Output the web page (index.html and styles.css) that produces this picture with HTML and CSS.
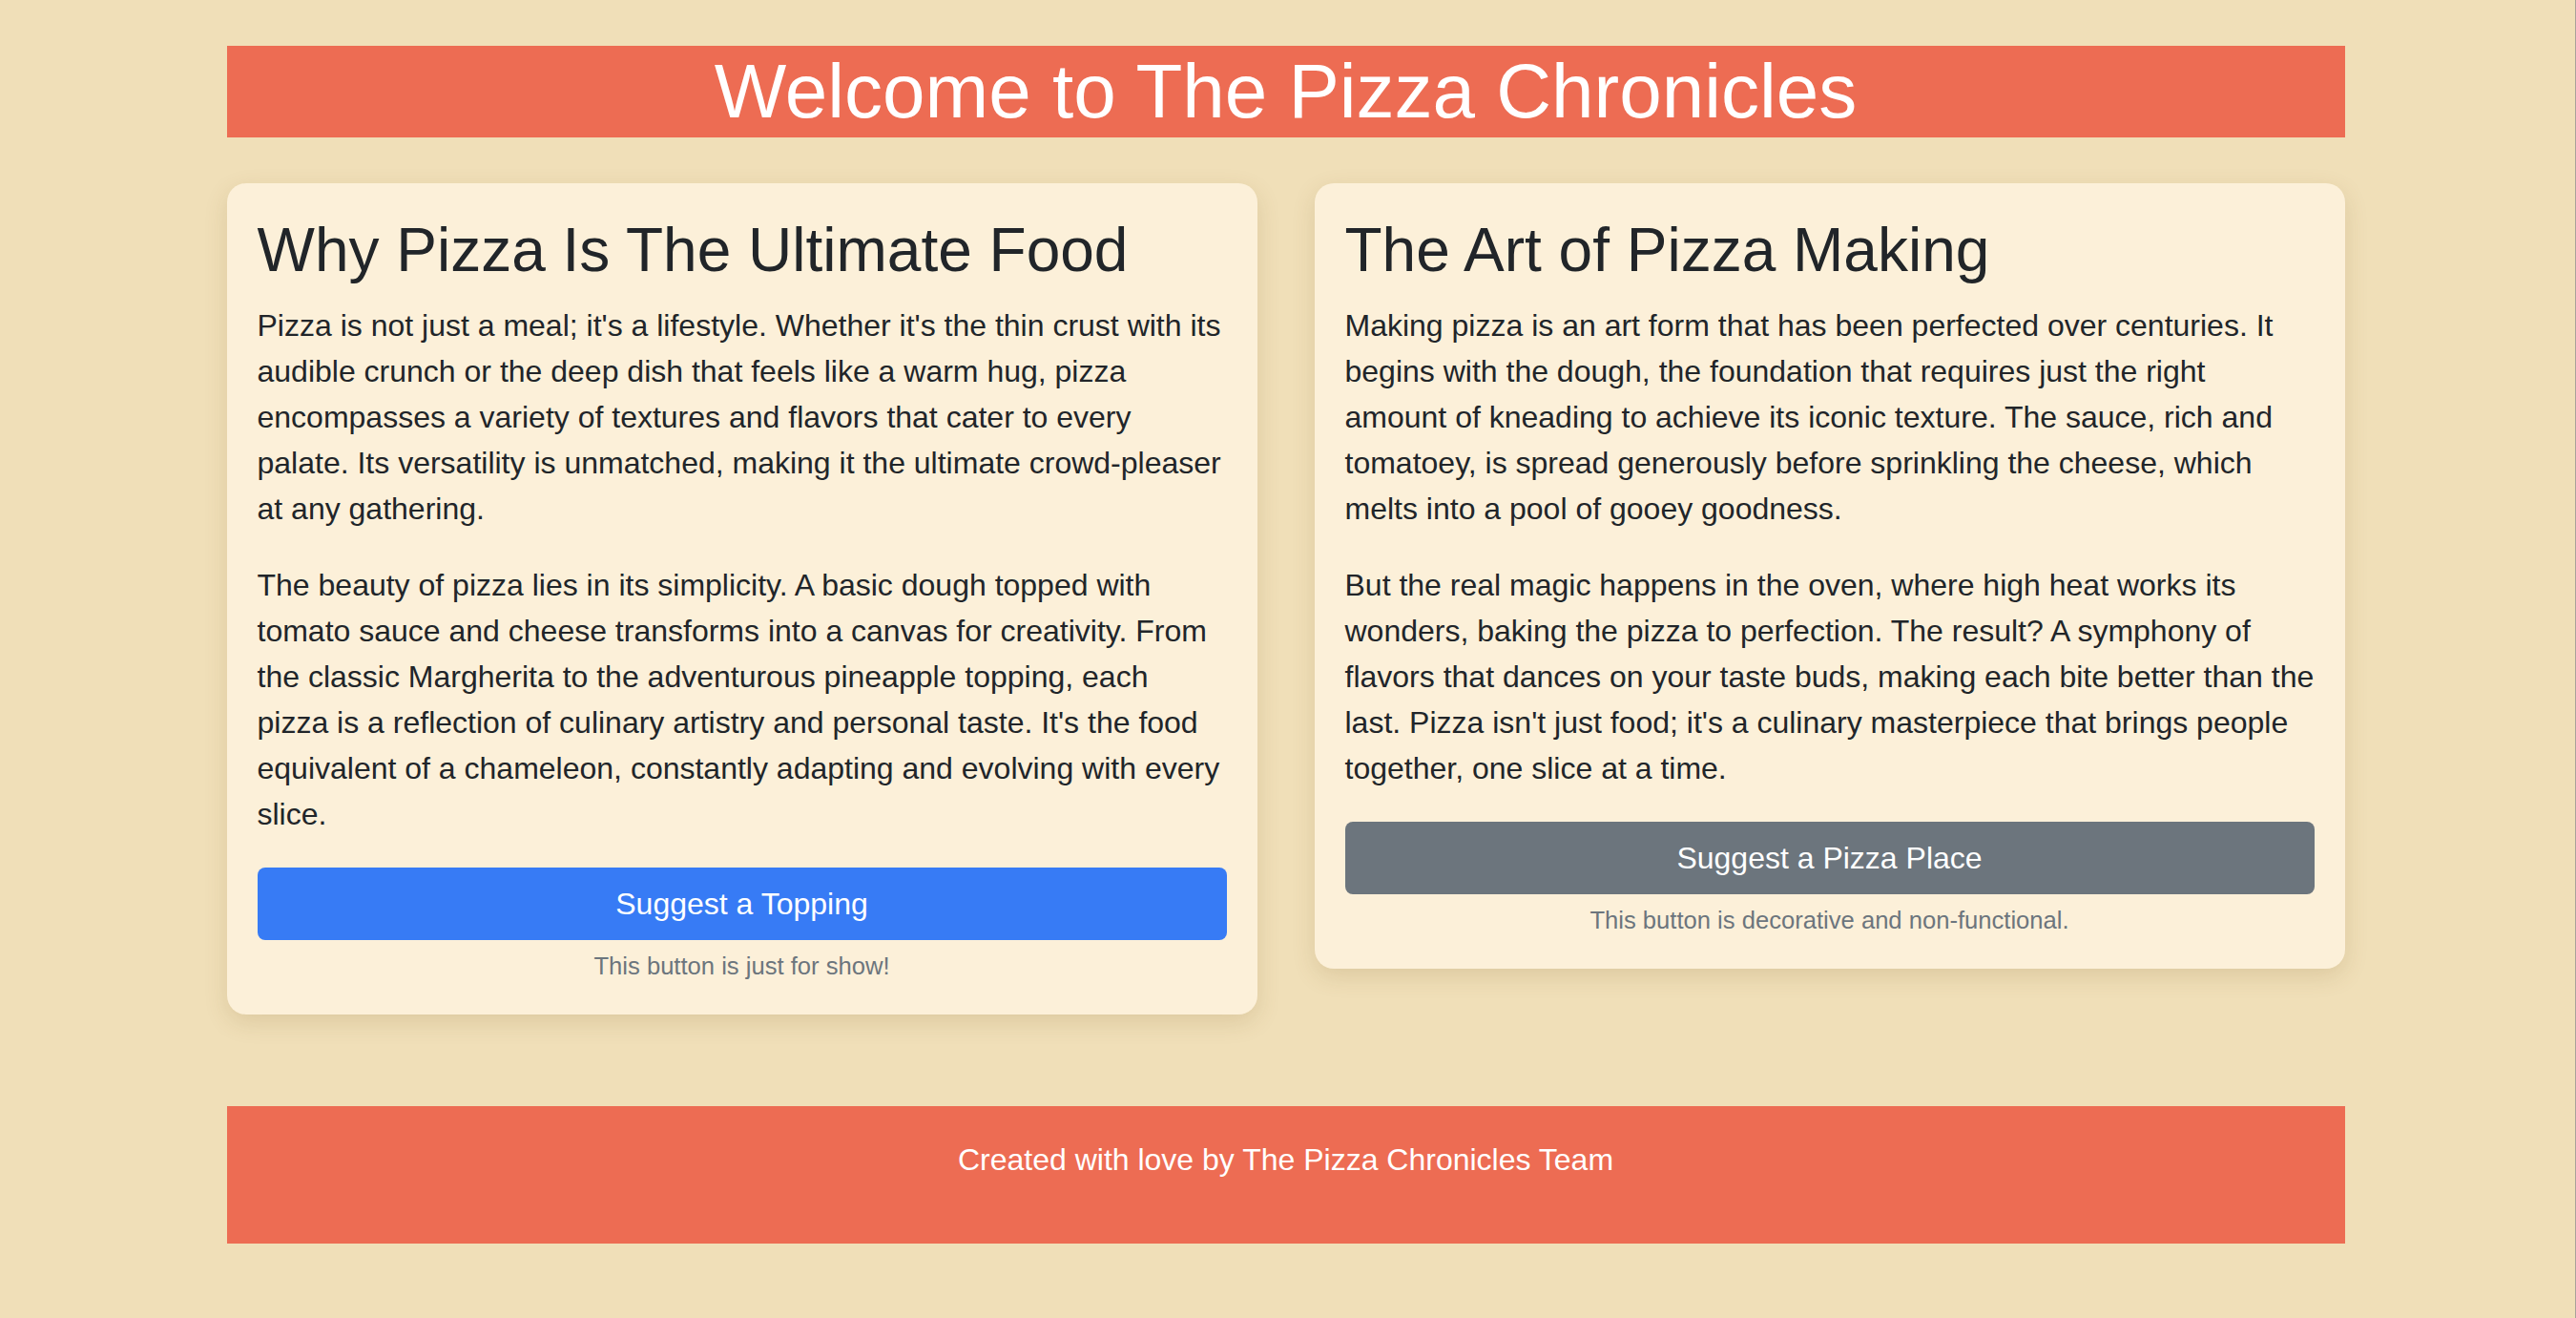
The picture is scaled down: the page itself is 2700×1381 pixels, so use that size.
FILE: index.html
```html
<!DOCTYPE html>
<html lang="en">
<head>
<meta charset="utf-8">
<title>The Pizza Chronicles</title>
<link rel="stylesheet" href="styles.css">
</head>
<body>
<div class="container">
  <header class="site-header">
    <h1>Welcome to The Pizza Chronicles</h1>
  </header>
  <main class="cards">
    <section class="card">
      <h2>Why Pizza Is The Ultimate Food</h2>
      <p>Pizza is not just a meal; it's a lifestyle. Whether it's the thin crust with its audible crunch or the deep dish that feels like a warm hug, pizza encompasses a variety of textures and flavors that cater to every palate. Its versatility is unmatched, making it the ultimate crowd-pleaser at any gathering.</p>
      <p>The beauty of pizza lies in its simplicity. A basic dough topped with tomato sauce and cheese transforms into a canvas for creativity. From the classic Margherita to the adventurous pineapple topping, each pizza is a reflection of culinary artistry and personal taste. It's the food equivalent of a chameleon, constantly adapting and evolving with every slice.</p>
      <button class="btn btn-primary" type="button">Suggest a Topping</button>
      <small class="note">This button is just for show!</small>
    </section>
    <section class="card">
      <h2>The Art of Pizza Making</h2>
      <p>Making pizza is an art form that has been perfected over centuries. It begins with the dough, the foundation that requires just the right amount of kneading to achieve its iconic texture. The sauce, rich and tomatoey, is spread generously before sprinkling the cheese, which melts into a pool of gooey goodness.</p>
      <p>But the real magic happens in the oven, where high heat works its wonders, baking the pizza to perfection. The result? A symphony of flavors that dances on your taste buds, making each bite better than the last. Pizza isn't just food; it's a culinary masterpiece that brings people together, one slice at a time.</p>
      <button class="btn btn-secondary" type="button">Suggest a Pizza Place</button>
      <small class="note">This button is decorative and non-functional.</small>
    </section>
  </main>
  <footer class="site-footer">
    <p>Created with love by The Pizza Chronicles Team</p>
  </footer>
</div>
</body>
</html>
```
FILE: styles.css
```css
* { box-sizing: border-box; }
html {
  background: #f0dfb8;
}
body {
  margin: 0;
  padding: 48px 4px 0 0;
  background: #f0dfb8;
  color: #212529;
  font-family: "Liberation Sans", Arial, Helvetica, sans-serif;
  font-size: 32px;
  line-height: 48px;
  border-right: 1px solid #a9a29a;
  min-height: 1381px;
}
.container {
  width: 2220px;
  margin: 0 auto;
}
.site-header {
  background: #ed6c53;
  color: #fff;
  text-align: center;
  margin-bottom: 48px;
}
.site-header h1 {
  margin: 0;
  font-size: 80px;
  font-weight: 400;
  line-height: 96px;
}
.cards {
  display: grid;
  grid-template-columns: 1080px 1080px;
  column-gap: 60px;
  align-items: start;
}
.card {
  background: #fcf0d9;
  border-radius: 20px;
  padding: 32px;
  box-shadow: 0 8px 24px rgba(120, 90, 30, 0.16);
  display: flex;
  flex-direction: column;
}
.card h2 {
  margin: 0 0 16px;
  font-size: 64px;
  font-weight: 400;
  line-height: 76.8px;
}
.card p {
  margin: 0 0 32px;
}
.btn {
  display: block;
  width: 100%;
  height: 76px;
  border: 0;
  border-radius: 8px;
  color: #fff;
  font-family: inherit;
  font-size: 32px;
  line-height: 76px;
  padding: 0;
  text-align: center;
}
.btn-primary { background: #377bf5; }
.btn-secondary { background: #6c757d; }
.note {
  display: block;
  margin-top: 8px;
  text-align: center;
  color: #6c757d;
  font-size: 25.6px;
  line-height: 38.4px;
}
.site-footer {
  margin-top: 96px;
  background: #ed6c53;
  color: #fff;
  text-align: center;
  padding: 32px 0;
}
.site-footer p {
  margin: 0 0 32px;
}
```
